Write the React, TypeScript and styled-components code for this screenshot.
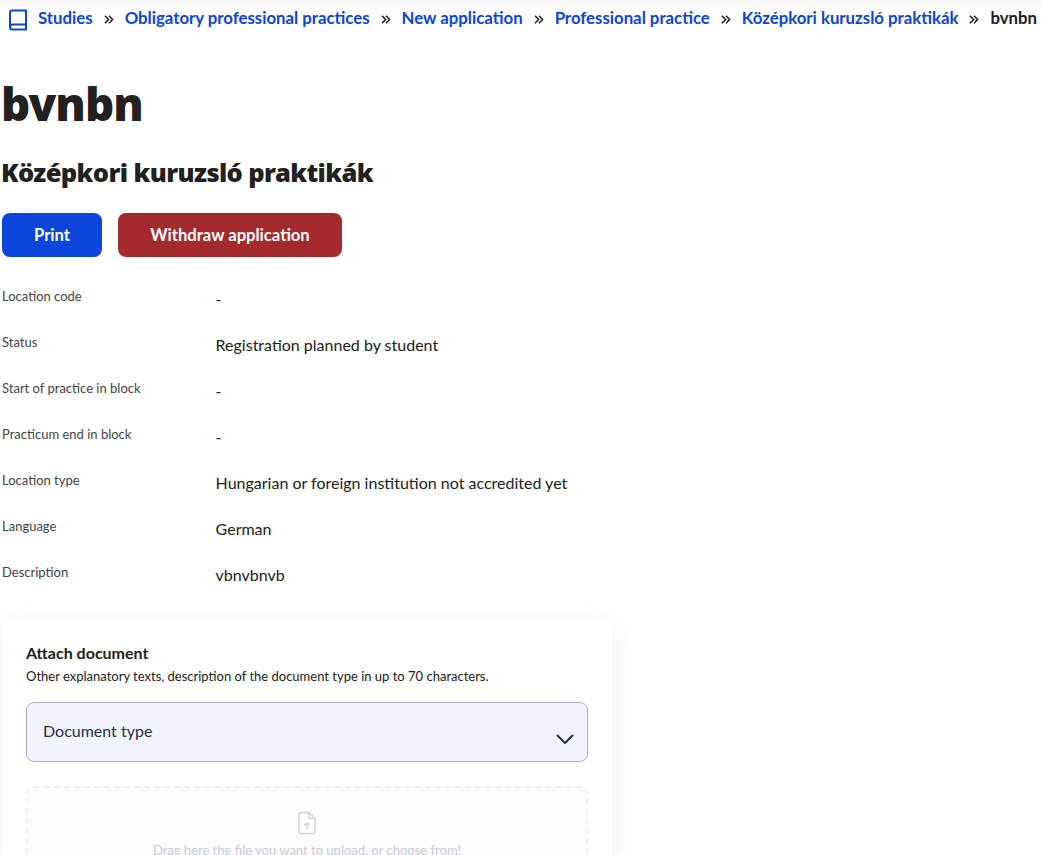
import React from 'react'
import styled, { createGlobalStyle } from 'styled-components'

const GlobalStyle = createGlobalStyle`
  html, body {
    margin: 0;
    padding: 0;
    height: 855px;
    overflow: hidden;
    background: #ffffff;
    font-family: Lato, "Liberation Sans", sans-serif;
    color: #212121;
  }
`

const crumbs = [
  'Studies',
  'Obligatory professional practices',
  'New application',
  'Professional practice',
  'Középkori kuruzsló praktikák',
]

const details = [
  ['Location code', '-'],
  ['Status', 'Registration planned by student'],
  ['Start of practice in block', '-'],
  ['Practicum end in block', '-'],
  ['Location type', 'Hungarian or foreign institution not accredited yet'],
  ['Language', 'German'],
  ['Description', 'vbnvbnvb'],
]

export default function App() {
  return (
    <Page>
      <GlobalStyle />
      <Breadcrumb>
        <BookIcon viewBox="0 0 20 22" fill="none" stroke="#0b45dc" strokeWidth="2" strokeLinecap="round" strokeLinejoin="round">
          <path d="M2 17.5V3.5C2 2.4 2.9 1.5 4 1.5H18V20.5H4.5C3.1 20.5 2 19.4 2 18C2 16.6 3.1 15.5 4.5 15.5H18" />
        </BookIcon>
        {crumbs.map((crumb) => (
          <React.Fragment key={crumb}>
            <CrumbLink>{crumb}</CrumbLink>
            <Chevrons viewBox="0 0 10 9" fill="none" stroke="#212121" strokeWidth="1.5">
              <path d="M1 .8L4.6 4.5L1 8.2M5 .8L8.6 4.5L5 8.2" />
            </Chevrons>
          </React.Fragment>
        ))}
        <CrumbCurrent>bvnbn</CrumbCurrent>
      </Breadcrumb>

      <Title>bvnbn</Title>
      <Subtitle>Középkori kuruzsló praktikák</Subtitle>

      <Actions>
        <ActionButton $bg="#0b45dc" $width={100}>Print</ActionButton>
        <ActionButton $bg="#a52a2d" $width={224}>Withdraw application</ActionButton>
      </Actions>

      <DetailList>
        {details.map(([label, value]) => (
          <DetailRow key={label}>
            <DetailLabel>{label}</DetailLabel>
            <DetailValue>{value}</DetailValue>
          </DetailRow>
        ))}
      </DetailList>

      <Card>
        <CardTitle>Attach document</CardTitle>
        <CardHint>Other explanatory texts, description of the document type in up to 70 characters.</CardHint>
        <SelectBox>
          <span>Document type</span>
          <SelectArrow viewBox="0 0 18 11" fill="none" stroke="#25304f" strokeWidth="2" strokeLinecap="round" strokeLinejoin="round">
            <path d="M1.5 1.5L9 9L16.5 1.5" />
          </SelectArrow>
        </SelectBox>
        <DropZone>
          <UploadIcon viewBox="0 0 20 24" fill="none" stroke="#d3d5dd" strokeWidth="1.6" strokeLinejoin="round" strokeLinecap="round">
            <path d="M2 3.5C2 2.4 2.9 1.5 4 1.5H12L18 7.5V20.5C18 21.6 17.1 22.5 16 22.5H4C2.9 22.5 2 21.6 2 20.5Z" />
            <path d="M12 1.5V7.5H18" />
            <path d="M10 17.5V12M7.8 14L10 11.8L12.2 14" />
          </UploadIcon>
          <DropText>Drag here the file you want to upload, or choose from!</DropText>
        </DropZone>
      </Card>
    </Page>
  )
}

const Page = styled.div`
  width: 1042px;
  height: 855px;
  overflow: hidden;
  padding: 0 2px;
  box-sizing: border-box;
`

const Breadcrumb = styled.nav`
  height: 35px;
  display: flex;
  align-items: center;
  white-space: nowrap;
  background: linear-gradient(#f8f8f8, #ffffff 10px);
  margin: 0 -2px;
  padding-left: 8px;
`

const BookIcon = styled.svg`
  width: 20px;
  height: 22px;
  margin: 4px 10px 0 0;
  flex: none;
`

const CrumbLink = styled.a`
  color: #0b45dc;
  font-size: 16.77px;
  font-weight: 700;
`

const CrumbCurrent = styled.span`
  color: #212121;
  font-size: 16.77px;
  font-weight: 700;
`

const Chevrons = styled.svg`
  width: 10px;
  height: 9px;
  margin: 3px 11px 0 11px;
  flex: none;
`

const Title = styled.h1`
  margin: 38px 0 0 -1px;
  font-family: "Noto Sans", sans-serif;
  font-size: 45.5px;
  line-height: 60px;
  font-weight: 900;
  color: #212121;
  letter-spacing: -0.9px;
`

const Subtitle = styled.h2`
  margin: 23px 0 0 -1px;
  font-family: "Noto Sans", sans-serif;
  font-size: 25.5px;
  line-height: 32px;
  font-weight: 900;
  color: #212121;
  letter-spacing: -0.6px;
`

const Actions = styled.div`
  display: flex;
  gap: 16px;
  margin-top: 25px;
`

const ActionButton = styled.button<{ $bg: string; $width: number }>`
  width: ${(p) => p.$width}px;
  height: 44px;
  border: 0;
  border-radius: 8px;
  background: ${(p) => p.$bg};
  color: #ffffff;
  font-family: inherit;
  font-size: 16.6px;
  font-weight: 700;
  padding: 0;
`

const DetailList = styled.div`
  margin-top: 20px;
`

const DetailRow = styled.div`
  display: grid;
  grid-template-columns: 213.6px 1fr;
  height: 46px;
`

const DetailLabel = styled.div`
  font-size: 13px;
  color: #43434a;
  height: 38px;
  line-height: 38px;
`

const DetailValue = styled.div`
  font-size: 16px;
  line-height: 44px;
  color: #212121;
`

const Card = styled.section`
  width: 610px;
  margin-top: 20px;
  padding: 24px 24px 0;
  box-sizing: border-box;
  background: #ffffff;
  border-radius: 4px;
  box-shadow: 0 8px 32px rgba(40, 50, 90, 0.08);
`

const CardTitle = styled.div`
  font-size: 16px;
  line-height: 20px;
  font-weight: 700;
  color: #212121;
`

const CardHint = styled.div`
  font-size: 13px;
  line-height: 18px;
  color: #212121;
  margin-top: 4px;
`

const SelectBox = styled.div`
  position: relative;
  height: 60px;
  margin-top: 17px;
  padding: 0 16px;
  display: flex;
  align-items: center;
  box-sizing: border-box;
  width: 562px;
  background: #f2f3fc;
  border: 1px solid #a9adc9;
  border-radius: 8px;
  font-size: 16px;
  color: #25304f;
  span {
    margin-top: -4px;
  }
`

const SelectArrow = styled.svg`
  position: absolute;
  right: 13px;
  top: 31px;
  width: 18px;
  height: 11px;
`

const DropZone = styled.div`
  width: 562px;
  height: 150px;
  margin-top: 24px;
  box-sizing: border-box;
  background: #fcfcfe;
  border: 2px dashed #f0f1f6;
  border-radius: 8px;
  display: flex;
  flex-direction: column;
  align-items: center;
  padding-top: 23px;
`

const UploadIcon = styled.svg`
  width: 20px;
  height: 24px;
`

const DropText = styled.div`
  font-size: 13px;
  line-height: 18px;
  color: #c9cbd3;
  margin-top: 6px;
`
